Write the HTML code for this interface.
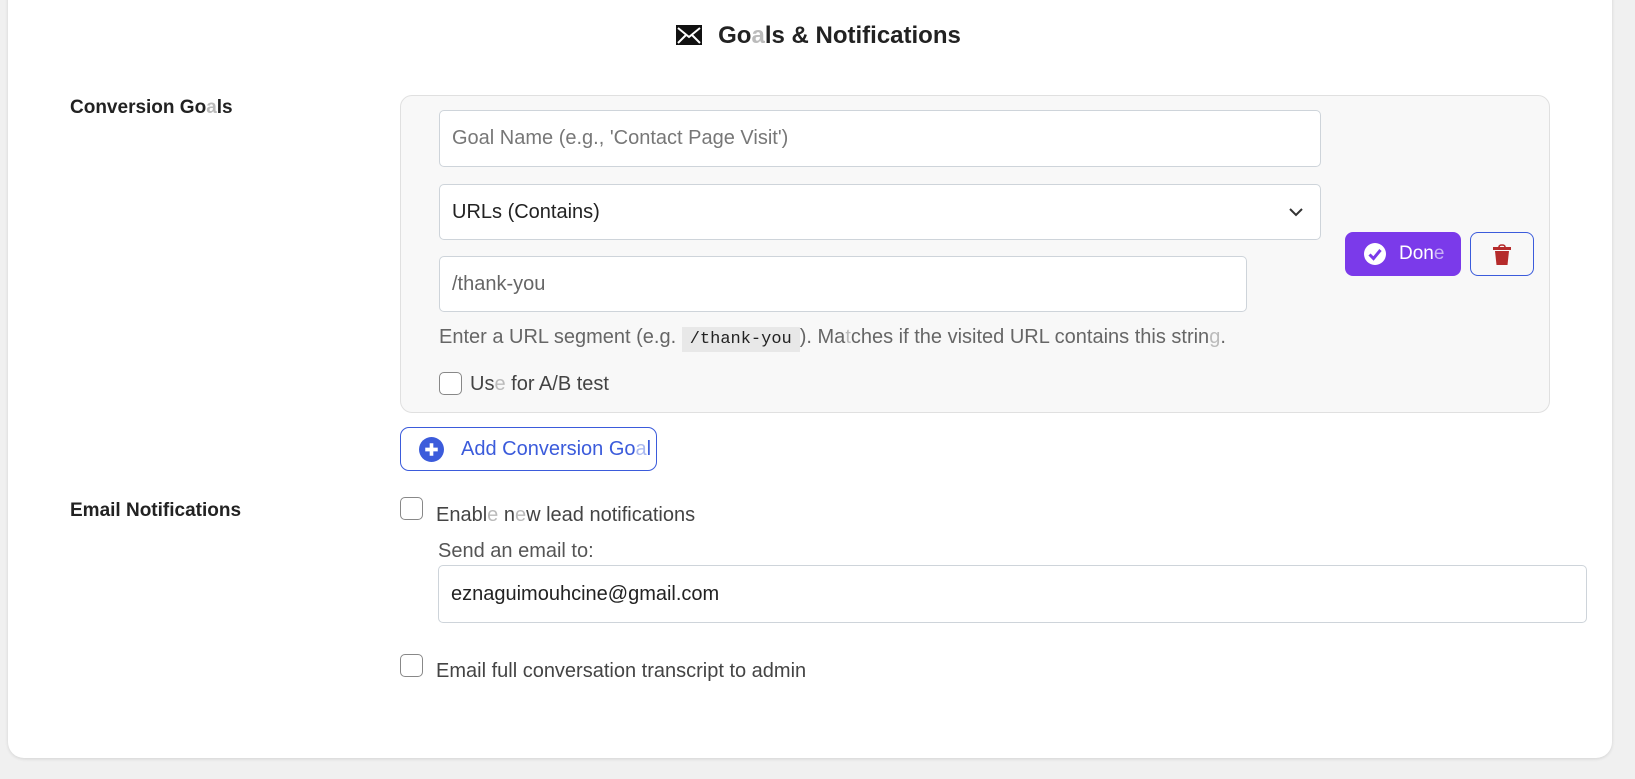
<!DOCTYPE html>
<html><head><meta charset="utf-8"><style>
*{box-sizing:border-box;margin:0;padding:0}
body{width:1635px;height:779px;background:#f0f0f0;font-family:"Liberation Sans",sans-serif;color:#333;position:relative;overflow:hidden}
.card{position:absolute;left:8px;top:-20px;width:1604px;height:778px;background:#fff;border-radius:16px;box-shadow:0 1px 3px rgba(0,0,0,.12)}
.abs{position:absolute}
.title{left:0;width:1635px;top:22px;text-align:center;font-size:24px;font-weight:bold;color:#222;padding-left:2px}
.lbl{font-size:19px;font-weight:bold;color:#222}
.box{left:400px;top:95px;width:1150px;height:318px;background:#f8f8f8;border:1px solid #e0e0e0;border-radius:12px}
.inp{background:#fff;border:1px solid #ced4da;border-radius:5px;font-size:20px;padding-left:12px;display:flex;align-items:center}
.cb{width:23px;height:23px;border:1.5px solid #888;border-radius:5px;background:#fff}
.t{font-size:20px;color:#444}
.lt{color:#bbb}
</style></head><body>
<div class="card"></div>
<div class="abs title"><svg width="26" height="20" viewBox="0 0 26 20" style="vertical-align:-2px;margin-right:16px"><rect x="0" y="0" width="26" height="20" fill="#111"/><path d="M2 3 L13 12 L24 3 M2 18 L10 10 M24 18 L16 10" stroke="#fff" stroke-width="2" fill="none"/></svg>Go<span class="lt">a</span>ls &amp; Notifications</div>
<div class="abs lbl" style="left:70px;top:97px">Conversion Go<span class="lt">a</span>ls</div>
<div class="abs box"></div>
<div class="abs inp" style="left:439px;top:110px;width:882px;height:57px;color:#777">Goal Name (e.g., 'Contact Page Visit')</div>
<div class="abs inp" style="left:439px;top:184px;width:882px;height:56px;color:#222">URLs (Contains)<svg class="abs" style="right:16px;top:21px" width="16" height="12" viewBox="0 0 16 12"><path d="M2 3 L8 9 L14 3" stroke="#333" stroke-width="2" fill="none"/></svg></div>
<div class="abs inp" style="left:439px;top:256px;width:808px;height:56px;color:#666">/thank-you</div>
<div class="abs t" style="left:439px;top:326px;color:#666">Enter a URL segment (e.g. <span style="font-family:'Liberation Mono',monospace;font-size:17px;background:#e8e8e8;padding:3px 8px;color:#222">/thank-you</span>). Ma<span class="lt">t</span>ches if the visited URL contains this strin<span class="lt">g</span>.</div>
<div class="abs cb" style="left:439px;top:372px"></div>
<div class="abs t" style="left:470px;top:373px">Us<span class="lt">e</span> for A/B test</div>
<div class="abs" style="left:1345px;top:232px;width:116px;height:44px;background:#7b3aea;border-radius:8px;color:#fff;font-size:19px;display:flex;align-items:center;padding-left:18px"><svg width="24" height="24" viewBox="0 0 24 24" style="margin-right:12px"><circle cx="12" cy="12" r="11" fill="#fff"/><path d="M6.5 12.5 L10.5 16.5 L17.5 8" stroke="#7b3aea" stroke-width="3" fill="none"/></svg>Don<span style="color:#c9b0f5">e</span></div>
<div class="abs" style="left:1470px;top:232px;width:64px;height:44px;border:1.5px solid #3b5bdb;border-radius:8px;background:#f8f8f8"><svg class="abs" style="left:20px;top:11px" width="22" height="22" viewBox="0 0 22 22"><path d="M8 3 Q8 1 11 1 Q14 1 14 3" stroke="#b52b2b" stroke-width="1.6" fill="none"/><rect x="2" y="3" width="18" height="3" fill="#b52b2b"/><path d="M4 7 H18 L16.5 21 H5.5 Z" fill="#b52b2b"/></svg></div>
<div class="abs" style="left:400px;top:427px;width:257px;height:44px;border:1.5px solid #3b5bdb;border-radius:9px;color:#3b5bdb;font-size:20px;display:flex;align-items:center;padding-left:18px;white-space:nowrap"><svg width="25" height="25" viewBox="0 0 24 24" style="margin-right:17px"><circle cx="12" cy="12" r="12" fill="#3b5bdb"/><path d="M12 6 V18 M6 12 H18" stroke="#fff" stroke-width="3.5"/></svg>Add Conversion Go<span style="color:#a9b8f0">a</span>l</div>
<div class="abs lbl" style="left:70px;top:500px">Email Notifications</div>
<div class="abs cb" style="left:400px;top:497px"></div>
<div class="abs t" style="left:436px;top:504px">Enabl<span class="lt">e</span> n<span class="lt">e</span>w lead notifications</div>
<div class="abs t" style="left:438px;top:540px;color:#555">Send an email to:</div>
<div class="abs inp" style="left:438px;top:565px;width:1149px;height:58px;color:#222">eznaguimouhcine@gmail.com</div>
<div class="abs cb" style="left:400px;top:654px"></div>
<div class="abs t" style="left:436px;top:660px">Email full conversation transcript to admin</div>
</body></html>
